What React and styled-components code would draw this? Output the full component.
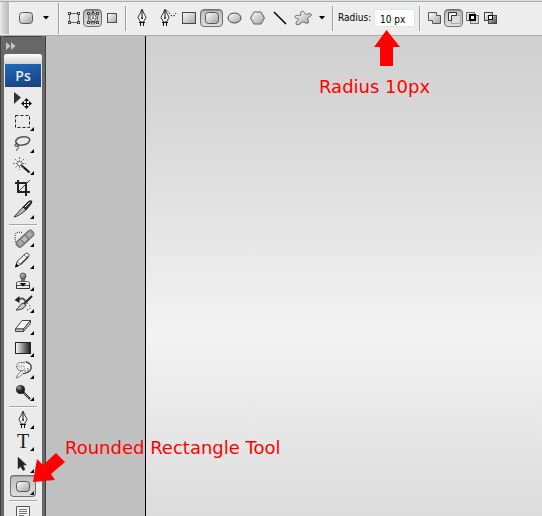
import React, { useState } from "react";
import styled, { createGlobalStyle, css } from "styled-components";

const GlobalStyle = createGlobalStyle`
  * {
    box-sizing: border-box;
  }

  body {
    margin: 0;
    font-family: "DejaVu Sans Condensed", "DejaVu Sans", sans-serif;
  }
`;

const Window = styled.div`
  position: relative;
  display: flex;
  flex-direction: column;
  height: 100vh;
  overflow: hidden;
  background: #c0c0c0;
`;

const OptionsBar = styled.header`
  display: flex;
  align-items: center;
  flex: none;
  height: 36px;
  background: #ededed;
  border-top: 1px solid #dedede;
  border-bottom: 1px solid #acacac;
  box-shadow: inset 0 1px 0 #acacac;
`;

const Grip = styled.div`
  width: 10px;
  height: 32px;
  border-left: 1px solid #ededed;
  border-right: 1px solid #f8f8f8;
  background: linear-gradient(90deg, #e2e2e2, #b8b8b8);
`;

const OptionGroup = styled.div`
  display: flex;
  align-items: center;
  padding: 0 ${(props) => props.$pad || 0}px;
`;

const BarDivider = styled.div`
  width: 2px;
  height: ${(props) => (props.$tall ? 31 : 25)}px;
  margin: 0 4px;
  border-left: 1px solid #9d9d9d;
  border-right: 1px solid #fafafa;
`;

const pressed = css`
  border-color: #707070;
  background: linear-gradient(#bdbdbd, #dedede);
  box-shadow: inset 0 1px 1px #8c8c8c;
`;

const OptionButton = styled.button`
  display: flex;
  align-items: center;
  justify-content: center;
  width: ${(props) => props.$width}px;
  height: 18px;
  padding: 0;
  border: 1px solid transparent;
  border-radius: 4px;
  background: none;

  svg {
    flex: none;
    overflow: visible;
  }

  ${(props) => props.$active && pressed}
`;

const RadiusField = styled.div`
  display: flex;
  align-items: center;
  gap: 4px;
`;

const RadiusLabel = styled.label`
  width: 32px;
  font-size: 10px;
  line-height: 14px;
  white-space: nowrap;
  color: #000000;
`;

const RadiusInput = styled.input`
  width: 41px;
  height: 18px;
  padding: 2px 0 0 5px;
  border: 1px solid #dbe5ec;
  border-radius: 2px;
  background: #ffffff;
  color: #000000;
  font-family: inherit;
  font-size: 10px;
`;

const Workspace = styled.main`
  display: flex;
  flex: 1;
  min-height: 0;
`;

const Dock = styled.aside`
  flex: none;
  width: 46px;
  overflow: hidden;
  padding: 0 3px;
  background: #676767;
  border-left: 1px solid #3f3f3f;
  border-right: 1px solid #3f3f3f;
`;

const CollapseButton = styled.button`
  display: block;
  width: 100%;
  height: 18px;
  padding: 0 0 0 1px;
  border: none;
  border-top: 1px solid #3f3f3f;
  background: none;
  text-align: left;

  svg {
    display: block;
  }
`;

const ToolPanel = styled.div`
  background: #ebebeb;
  border-radius: 3px 3px 0 0;
`;

const PanelTop = styled.div`
  height: 10px;
  border-radius: 3px 3px 0 0;
  background: linear-gradient(#fdfdfd, #d2d2d2);
`;

const AppBadge = styled.div`
  height: 23px;
  margin: 0 1px 2px;
  background: linear-gradient(170deg, #2068b8, #1c569f 45%, #173f7e);
  color: #e4eefa;
  font-family: "Open Sans", sans-serif;
  font-size: 14px;
  font-weight: 600;
  line-height: 23px;
  text-align: center;
`;

const ToolGroup = styled.div`
  display: flex;
  flex-direction: column;
  align-items: center;
`;

const ToolButton = styled.button`
  position: relative;
  display: flex;
  justify-content: center;
  width: 26px;
  height: 22px;
  padding: 0;
  border: none;
  background: none;

  svg {
    flex: none;
  }

  ${(props) =>
    props.$active &&
    css`
      border-radius: 4px;
      background: linear-gradient(#bdbdbd, #dedede);
      box-shadow: inset 0 0 0 1px #707070, inset 0 2px 1px #9c9c9c;
    `}
`;

const ToolDivider = styled.div`
  height: 2px;
  margin: 3px 5px 1px;
  border-top: 1px solid #a5a5a5;
  border-bottom: 1px solid #fafafa;
`;

const Pasteboard = styled.div`
  flex: none;
  width: 99px;
  background: #c0c0c0;
`;

const Canvas = styled.div`
  flex: 1;
  border-left: 1px solid #000000;
  background: linear-gradient(#d0d0d0, #d8d8d8 18%, #f3f3f3 62%, #dcdcdc);
`;

// Red notes sit over the whole window
const Note = styled.div`
  position: absolute;
  left: ${(props) => props.$left}px;
  top: ${(props) => props.$top}px;
  color: #ff0000;
  font-family: "DejaVu Sans", sans-serif;
  font-size: 18px;
  line-height: 22px;
  white-space: nowrap;
`;

const NoteArrow = styled.svg`
  position: absolute;
  left: ${(props) => props.$left}px;
  top: ${(props) => props.$top}px;
  fill: #ff0000;
`;

const GradientDefs = styled.svg`
  position: absolute;
`;

const Gradients = () => (
  <GradientDefs width="0" height="0" aria-hidden="true">
    <defs>
      <linearGradient id="metal" x1="0" y1="0" x2="1" y2="1">
        <stop offset="0" stopColor="#ffffff" />
        <stop offset="1" stopColor="#a2a2a2" />
      </linearGradient>
      <linearGradient id="fade" x1="0" x2="1">
        <stop offset="0" stopColor="#ffffff" />
        <stop offset="1" stopColor="#181818" />
      </linearGradient>
      <linearGradient id="shade" x1="0" y1="0" x2="1" y2="1">
        <stop offset="0" stopColor="#e0e0e0" />
        <stop offset="1" stopColor="#444444" />
      </linearGradient>
      <radialGradient id="ball" cx="0.35" cy="0.3" r="0.7">
        <stop offset="0" stopColor="#a0a0a0" />
        <stop offset="0.5" stopColor="#303030" />
        <stop offset="1" stopColor="#111111" />
      </radialGradient>
    </defs>
  </GradientDefs>
);

const Glyph = ({ width = 18, children }) => (
  <svg
    width={width}
    height="18"
    viewBox={`0 0 ${width} 18`}
    fill="none"
    stroke="#333333"
    aria-hidden="true"
  >
    {children}
  </svg>
);

const Nib = () => (
  <>
    <path
      d="M4.500 1C4 4 1.500 6 1 8.500L3.500 13h3L9 8.500C8.500 6 6 4 5.500 1Z"
      fill="#f4f4f4"
      stroke="#333333"
    />
    <path d="M5 0v8" stroke="#111111" />
    <circle cx="5" cy="9" r="1" fill="#111111" stroke="none" />
    <path d="M2 13.500h6M3.500 14v3M6.500 14v3" stroke="#111111" />
  </>
);

const RoundedShape = () => (
  <rect x="2.500" y="3.500" width="13" height="11" rx="3" fill="url(#metal)" stroke="#555555" />
);

const Caret = () => (
  <Glyph width={11}>
    <path d="M3 7h6L6 10.500Z" fill="#000000" stroke="none" />
  </Glyph>
);

const Handles = () => (
  <g fill="#f4f4f4" stroke="#444444">
    <rect x="3.500" y="3.500" width="2" height="2" />
    <rect x="12.500" y="3.500" width="2" height="2" />
    <rect x="3.500" y="12.500" width="2" height="2" />
    <rect x="12.500" y="12.500" width="2" height="2" />
  </g>
);

const modes = [
  {
    name: "Shape layers",
    art: (
      <>
        <rect x="4.500" y="4.500" width="9" height="9" stroke="#666666" fill="#e8e8e8" />
        <Handles />
      </>
    ),
  },
  {
    name: "Paths",
    active: true,
    art: (
      <>
        <path d="M4.500 5v8M13.500 5v8M5 4.500h2M11 4.500h2M5 13.500h2M11 13.500h2" stroke="#777777" />
        <Handles />
        <g transform="translate(5 2) scale(.8)">
          <Nib />
        </g>
      </>
    ),
  },
  {
    name: "Fill pixels",
    art: <rect x="4.500" y="4.500" width="9" height="9" fill="url(#metal)" stroke="#4c4c4c" />,
  },
];

const shapes = [
  {
    name: "Pen",
    art: (
      <g transform="translate(3 0)">
        <Nib />
      </g>
    ),
  },
  {
    name: "Freeform pen",
    art: (
      <>
        <g transform="translate(3 0)">
          <Nib />
        </g>
        <path d="M10 1.500l2 2 2 3 3 .5 2-3" stroke="#111111" strokeDasharray="1.500 1.500" />
      </>
    ),
  },
  {
    name: "Rectangle",
    art: <rect x="2.500" y="3.500" width="13" height="11" fill="url(#metal)" stroke="#444444" />,
  },
  { name: "Rounded rectangle", active: true, art: <RoundedShape /> },
  {
    name: "Ellipse",
    art: <ellipse cx="8.500" cy="9" rx="6.500" ry="5" fill="url(#metal)" stroke="#484848" />,
  },
  {
    name: "Polygon",
    art: <path d="M5 3h7l3.500 6L12 15H5L1.500 9Z" fill="url(#metal)" stroke="#606060" />,
  },
  {
    name: "Line",
    art: <path d="M2 3l12 12" stroke="#000000" strokeWidth="1.500" />,
  },
  {
    name: "Custom shape",
    art: (
      <path
        d="M6 6C4 2 9 1 10 4.500c1.500 2 3-.5 5.500 0 2.500 1.500-1 3.500-3 5 0 2 2 3 .5 4.500-2 1-4-1.500-5.500-1C5.500 14 4 16.500 1.500 15.500 0 13 3 11.500 3.500 10 3 9 0 10 0 7.500 1 5 4 7.500 6 6Z"
        fill="url(#metal)"
        stroke="#666666"
      />
    ),
  },
];

const areas = [
  {
    name: "Add to shape area",
    art: (
      <path d="M2.500 3.500h8v3h4v8h-8v-3h-4Z" fill="url(#metal)" stroke="#555555" />
    ),
  },
  {
    name: "Subtract from shape area",
    active: true,
    art: (
      <>
        <rect x="6.500" y="6.500" width="9" height="8" fill="#dddddd" stroke="#aaaaaa" />
        <path d="M3.500 3.500h8v3h-5v5h-3Z" fill="#f4f4f4" stroke="#333333" />
      </>
    ),
  },
  {
    name: "Intersect shape areas",
    art: (
      <>
        <rect x="2.500" y="3.500" width="8" height="8" fill="#dedede" stroke="#777777" />
        <rect x="6.500" y="6.500" width="8" height="8" fill="#d8d8d8" stroke="#777777" />
        <rect x="6" y="6" width="5" height="5" fill="#ffffff" stroke="#000000" strokeWidth="2" />
      </>
    ),
  },
  {
    name: "Exclude overlapping shape areas",
    art: (
      <>
        <rect x="1.500" y="3.500" width="8" height="8" fill="url(#metal)" stroke="#444444" />
        <rect x="5.500" y="6.500" width="8" height="8" fill="url(#shade)" stroke="#444444" />
        <rect x="5.500" y="6.500" width="4" height="4" fill="#ffffff" stroke="#000000" />
      </>
    ),
  },
];

const selection = [
  {
    name: "Move",
    noMenu: true,
    art: (
      <>
        <path d="M9 3v12l7-6.500Z" fill="#333333" stroke="none" />
        <path d="M21.500 10v9M17 14.500h9" stroke="#111111" />
        <path
          d="M21.500 9l2.500 3h-5ZM21.500 20l2.500-3h-5ZM16 14.500l3-2.500v5ZM27 14.500l-3-2.500v5Z"
          fill="#111111"
          stroke="none"
        />
      </>
    ),
  },
  {
    name: "Marquee",
    art: <rect x="10.500" y="4.500" width="14" height="12" stroke="#222222" strokeDasharray="3 2" />,
  },
  {
    name: "Lasso",
    art: (
      <>
        <path d="M12.500 11C9 9 11 5 16.500 4c6-1 9 1.500 8 4-1 3-7 5-11 4" stroke="#555555" strokeWidth="1.500" />
        <path d="M12 11c-2-1-3 2-1 2.500 3 0 3-4 1-2 2 2 2 4-1 6" stroke="#333333" />
      </>
    ),
  },
  {
    name: "Magic wand",
    art: (
      <>
        <path d="M16 10l8.500 7.500" stroke="#111111" strokeWidth="2" />
        <path d="M14.500 2v13M8 8.500h13M10 4l9 9M19 4l-9 9" stroke="#777777" strokeDasharray="2 1" />
        <circle cx="14.500" cy="8.500" r="2" fill="#ffffff" stroke="#777777" />
      </>
    ),
  },
  {
    name: "Crop",
    noMenu: true,
    art: (
      <>
        <path d="M13 3v12h12" stroke="#222222" strokeWidth="2" />
        <path d="M10 6h11v13" stroke="#222222" strokeWidth="2" />
        <path d="M14 14L25 3" stroke="#444444" />
      </>
    ),
  },
  {
    name: "Slice",
    art: (
      <>
        <path d="M9 18l9-10 3 3c-4 3-7 6-12 7Z" fill="#bbbbbb" stroke="#333333" />
        <path d="M18 8l6-6h3l-1 3-5 6Z" fill="#333333" stroke="#222222" />
        <path d="M20 8l5-5" stroke="#eeeeee" />
      </>
    ),
  },
];

const retouch = [
  {
    name: "Healing brush",
    art: (
      <>
        <path d="M17 5.500c-4-1-7 0-7 4s0 6 3 7" stroke="#222222" strokeDasharray="1 1" />
        <g transform="rotate(-43 20 11)">
          <rect x="9" y="8" width="21" height="7" rx="3" fill="#999999" stroke="#686868" />
          <rect x="16" y="8.500" width="6" height="6" fill="#b0b0b0" stroke="#747474" />
          <path d="M12 10.500h3M12 12.500h3M17 10.500h4M17 12.500h4M24 10.500h3M24 12.500h3" stroke="#dedede" strokeDasharray="1 1" />
        </g>
      </>
    ),
  },
  {
    name: "Pencil",
    art: (
      <>
        <path d="M10.500 18l1.500-5.500 8.500-8c2-1 4 .5 3.500 2.500L15.500 15.500Z" fill="#f6f6f6" />
        <path d="M12 12.500l3.500 3M19 6l3.500 3" stroke="#777777" />
        <path d="M10 18.500l1.500-4 2.500 2.500Z" fill="#000000" stroke="none" />
        <path d="M15.500 15.500l8-8" stroke="#333333" strokeWidth="1.500" />
      </>
    ),
  },
  {
    name: "Clone stamp",
    art: (
      <>
        <path d="M16.500 6h3l-.5 5h-2Z" fill="#888888" />
        <circle cx="18" cy="5" r="3" fill="url(#shade)" stroke="#555555" />
        <path d="M11.500 11.500l2-1h9l2 1v3h-13Z" fill="#f0f0f0" stroke="#555555" />
        <path d="M14.500 12h7L18 15.500Z" fill="#111111" stroke="none" />
        <path d="M11.500 14v3.500h13V14" stroke="#333333" />
      </>
    ),
  },
  {
    name: "History brush",
    art: (
      <>
        <path d="M14 6.500c3-2 6-1 6 2" strokeWidth="2" stroke="#555555" />
        <path d="M9.500 7l5-4v7Z" fill="#222222" stroke="none" />
        <path d="M27 3l-8 8" stroke="#222222" strokeWidth="2" />
        <path d="M18 10l3 2c-2 4-6 5-10 5 3-2 4-6 7-7Z" fill="#cccccc" stroke="#333333" />
        <path d="M22 10c5 3 4 7-1 7" stroke="#222222" strokeDasharray="1 2" />
      </>
    ),
  },
  {
    name: "Eraser",
    art: (
      <>
        <path d="M10.500 14l6.500-8.500h8.500L18.500 14Z" fill="#ffffff" stroke="#444444" />
        <path d="M10.500 14v2.500h8V14ZM18.500 16.500l7-8v-3l-7 8.500Z" fill="#cccccc" stroke="#444444" />
      </>
    ),
  },
  {
    name: "Gradient",
    art: <rect x="10.500" y="5.500" width="15" height="11" fill="url(#fade)" stroke="#222222" />,
  },
  {
    name: "Smudge",
    art: (
      <>
        <path
          d="M11 19c1-3 4-5 5-7.500-2.500 0-4-1.500-4.500-3.500 0-2 1.500-5 4-4.500 3 .5 5-.5 6-1L25 4.500c2 2 1.500 7-1 8.500-2 0-3 2-5 1.500-1.500 0-1 0-2 1-2 1.500-3 3-6 3.500Z"
          fill="#fafafa"
          stroke="#777777"
        />
        <path d="M21 3l4 2c2 3 1 7-2 8-2 0-3 2-5 1.500" stroke="#222222" />
        <path d="M14 5v5M16.500 4v6M19 4v5M12 7.500h8" stroke="#c4c4c4" />
        <path d="M16 12c2 0 3-1 4-2.500M20 13v-2M23 12V9" stroke="#666666" />
      </>
    ),
  },
  {
    name: "Burn",
    art: (
      <>
        <path d="M18 11l7 7" stroke="#222222" strokeWidth="2" />
        <path d="M19 12l5 5" stroke="#888888" />
        <circle cx="15.500" cy="8.500" r="4.500" fill="url(#ball)" stroke="none" />
      </>
    ),
  },
];

const drawing = [
  {
    name: "Pen",
    art: (
      <g transform="translate(13 2)">
        <Nib />
      </g>
    ),
  },
  {
    name: "Type",
    art: (
      <text
        x="18"
        y="17"
        textAnchor="middle"
        fontFamily="Liberation Serif, serif"
        fontSize="20"
        fill="#222222"
        stroke="none"
      >
        T
      </text>
    ),
  },
  {
    name: "Path selection",
    art: <path d="M13 4v12l2.500-2.500 2.500 4 2-1-2-4.500h3.500Z" fill="#222222" stroke="#333333" strokeWidth=".5" />,
  },
  {
    name: "Rounded rectangle",
    active: true,
    art: <rect x="11.500" y="6.500" width="13" height="10" rx="3" fill="url(#metal)" stroke="#555555" />,
  },
];

const notes = [
  {
    name: "Notes",
    art: (
      <>
        <path d="M11.500 3.500h13v11h-4l-2 2-1-2h-6Z" fill="#f5f5f5" stroke="#555555" />
        <path d="M14 6.500h8M14 8.500h8M14 10.500h8M14 12.500h5" stroke="#777777" />
      </>
    ),
  },
];

const toolGroups = [selection, retouch, drawing, notes];

const OptionButtons = ({ items, width }) => (
  <OptionGroup>
    {items.map((item) => (
      <OptionButton
        key={item.name}
        type="button"
        aria-label={item.name}
        $width={width}
        $active={item.active}
      >
        <Glyph>{item.art}</Glyph>
      </OptionButton>
    ))}
  </OptionGroup>
);

const Tool = ({ tool }) => (
  <ToolButton type="button" aria-label={`${tool.name} tool`} $active={tool.active}>
    <svg width="34" height="22" viewBox="1 0 34 22" fill="none" stroke="#444444" aria-hidden="true">
      {tool.art}
      {!tool.noMenu && <path d="M29 16v4h-4Z" fill="#000000" stroke="none" />}
    </svg>
  </ToolButton>
);

const App = () => {
  const [radius, setRadius] = useState("10 px");

  return (
    <Window>
      <GlobalStyle />
      <Gradients />
      <OptionsBar>
        <Grip />
        <OptionGroup $pad={2}>
          <OptionButton type="button" aria-label="Tool preset" $width={27}>
            <Glyph>
              <RoundedShape />
            </Glyph>
          </OptionButton>
          <OptionButton type="button" aria-label="Preset list" $width={13}>
            <Caret />
          </OptionButton>
        </OptionGroup>
        <BarDivider $tall />
        <OptionButtons items={modes} width={19} />
        <BarDivider />
        <OptionButtons items={shapes} width={23} />
        <OptionButton type="button" aria-label="Geometry options" $width={13}>
          <Caret />
        </OptionButton>
        <BarDivider />
        <RadiusField>
          <RadiusLabel htmlFor="radius">Radius:</RadiusLabel>
          <RadiusInput
            id="radius"
            value={radius}
            onChange={(event) => setRadius(event.target.value)}
          />
        </RadiusField>
        <BarDivider />
        <OptionButtons items={areas} width={19} />
      </OptionsBar>

      <Workspace>
        <Dock>
          <CollapseButton type="button" aria-label="Expand panel">
            <svg width="12" height="17" viewBox="0 0 12 17" fill="#c4c4c4" aria-hidden="true">
              <path d="M1 5l4.500 4L1 13ZM6 5l4.500 4L6 13Z" />
            </svg>
          </CollapseButton>
          <ToolPanel>
            <PanelTop />
            <AppBadge>Ps</AppBadge>
            {toolGroups.map((group, index) => (
              <React.Fragment key={group[0].name + index}>
                {index > 0 && <ToolDivider />}
                <ToolGroup>
                  {group.map((tool) => (
                    <Tool key={tool.name} tool={tool} />
                  ))}
                </ToolGroup>
              </React.Fragment>
            ))}
          </ToolPanel>
        </Dock>
        <Pasteboard />
        <Canvas />
      </Workspace>

      <NoteArrow $left={374} $top={30} width="26" height="37" viewBox="0 0 26 37">
        <path d="M12.500 0L26 17h-7v19H6V17H0Z" />
      </NoteArrow>
      <Note $left={319} $top={76}>
        Radius 10px
      </Note>
      <NoteArrow $left={33} $top={452} width="32" height="31" viewBox="0 0 32 31">
        <path d="M0 30L4 7l6 6L23 1l9 9-14 12 4 6Z" />
      </NoteArrow>
      <Note $left={65} $top={437}>
        Rounded Rectangle Tool
      </Note>
    </Window>
  );
};

export default App;
